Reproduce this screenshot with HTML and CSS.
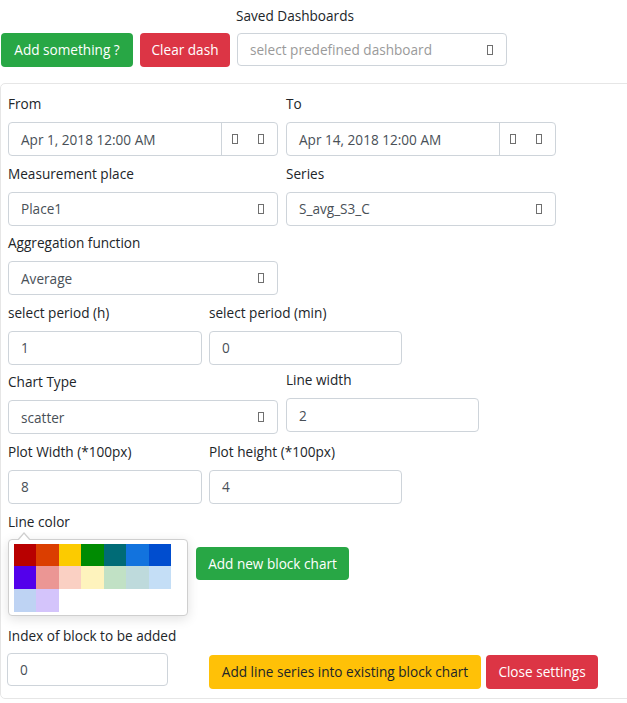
FILE: index.html
```html
<!DOCTYPE html>
<html>
<head>
<meta charset="utf-8">
<link rel="stylesheet" href="styles.css">
</head>
<body>
<div class="header">
  <div class="title">Saved Dashboards</div>
  <div class="toolbar">
    <button class="btn btn-green">Add something ?</button>
    <button class="btn btn-red">Clear dash</button>
    <div class="control select dash-select"><span class="placeholder">select predefined dashboard</span><span class="tofu"></span></div>
  </div>
</div>
<div class="card">
  <div class="row">
    <div class="field w270">
      <label>From</label>
      <div class="control date"><span class="val">Apr 1, 2018 12:00 AM</span><span class="addon"><span class="tofu"></span><span class="tofu"></span></span></div>
    </div>
    <div class="field w270">
      <label>To</label>
      <div class="control date"><span class="val">Apr 14, 2018 12:00 AM</span><span class="addon"><span class="tofu"></span><span class="tofu"></span></span></div>
    </div>
  </div>
  <div class="row">
    <div class="field w270">
      <label>Measurement place</label>
      <div class="control select"><span class="val">Place1</span><span class="tofu"></span></div>
    </div>
    <div class="field w270">
      <label>Series</label>
      <div class="control select"><span class="val">S_avg_S3_C</span><span class="tofu"></span></div>
    </div>
  </div>
  <div class="row">
    <div class="field w270">
      <label>Aggregation function</label>
      <div class="control select"><span class="val">Average</span><span class="tofu"></span></div>
    </div>
  </div>
  <div class="row narrow">
    <div class="field w194">
      <label>select period (h)</label>
      <div class="control"><span class="val">1</span></div>
    </div>
    <div class="field w193">
      <label>select period (min)</label>
      <div class="control"><span class="val">0</span></div>
    </div>
  </div>
  <div class="row">
    <div class="field w270">
      <label>Chart Type</label>
      <div class="control select"><span class="val">scatter</span><span class="tofu"></span></div>
    </div>
    <div class="field w193 raised">
      <label>Line width</label>
      <div class="control"><span class="val">2</span></div>
    </div>
  </div>
  <div class="row narrow">
    <div class="field w194">
      <label>Plot Width (*100px)</label>
      <div class="control"><span class="val">8</span></div>
    </div>
    <div class="field w193">
      <label>Plot height (*100px)</label>
      <div class="control"><span class="val">4</span></div>
    </div>
  </div>
  <div class="color-section">
    <label>Line color</label>
    <div class="color-row">
      <div class="picker">
        <span class="sw" style="background:#b80000"></span>
        <span class="sw" style="background:#db3e00"></span>
        <span class="sw" style="background:#fccb00"></span>
        <span class="sw" style="background:#008b02"></span>
        <span class="sw" style="background:#006b76"></span>
        <span class="sw" style="background:#1273de"></span>
        <span class="sw" style="background:#004dcf"></span>
        <span class="sw" style="background:#5300eb"></span>
        <span class="sw" style="background:#eb9694"></span>
        <span class="sw" style="background:#fad0c3"></span>
        <span class="sw" style="background:#fef3bd"></span>
        <span class="sw" style="background:#c1e1c5"></span>
        <span class="sw" style="background:#bedadc"></span>
        <span class="sw" style="background:#c4def6"></span>
        <span class="sw" style="background:#bed3f3"></span>
        <span class="sw" style="background:#d4c4fb"></span>
      </div>
      <button class="btn btn-green add-block">Add new block chart</button>
    </div>
  </div>
  <div class="index-section">
    <label>Index of block to be added</label>
    <div class="index-row">
      <div class="control index-input"><span class="val">0</span></div>
      <button class="btn btn-yellow">Add line series into existing block chart</button>
      <button class="btn btn-red">Close settings</button>
    </div>
  </div>
</div>
</body>
</html>
```

FILE: styles.css
```css
* { box-sizing: border-box; }
html { overflow: hidden; }
body {
  margin: 0;
  font-family: "Open Sans", "Noto Sans", sans-serif;
  font-size: 13.6px;
  color: #212529;
  background: #fff;
  width: 627px;
}
.header { padding-top: 6px; }
.title {
  width: 590px;
  text-align: center;
  line-height: 20px;
  margin-bottom: 7px;
}
.toolbar {
  display: flex;
  gap: 7px;
  padding-left: 1px;
  align-items: flex-start;
}
.btn {
  font-family: inherit;
  font-size: 13.6px;
  border: 0;
  border-radius: 4px;
  height: 34px;
  padding: 0;
  color: #fff;
  line-height: 34px;
  white-space: nowrap;
  text-align: center;
  cursor: pointer;
}
.btn-green { background: #28a745; }
.btn-red { background: #dc3545; }
.btn-yellow { background: #ffc107; color: #212529; }
.toolbar .btn-green { width: 132px; }
.toolbar .btn-red { width: 90px; }
.control {
  height: 34px;
  border: 1px solid #ced4da;
  border-radius: 4px;
  display: flex;
  align-items: center;
  padding: 0 12px;
  color: #495057;
  background: #fff;
}
.control .val { flex: 1; white-space: nowrap; }
.select { justify-content: space-between; }
.dash-select {
  width: 270px;
  height: 33px;
}
.placeholder { color: #9a9a9a; flex: 1; white-space: nowrap; }
.tofu {
  display: inline-block;
  width: 6px;
  height: 10px;
  border: 1px solid #6f6f6f;
  margin-right: 1px;
}
.date { padding-right: 0; }
.addon {
  display: flex;
  align-items: center;
  gap: 20px;
  height: 100%;
  border-left: 1px solid #ced4da;
  padding: 0 13px 0 10px;
}
.addon .tofu { margin-right: 0; }
.card {
  margin-top: 16px;
  border: 1px solid #e6e6e6;
  border-radius: 5px;
  padding: 10px 7px 9px 7px;
  width: 634px;
}
.row {
  display: flex;
  gap: 8px;
  align-items: flex-start;
  margin-bottom: 7.6px;
}
.row.narrow { gap: 7px; }
.field label, .color-section label, .index-section label {
  display: block;
  line-height: 20px;
  margin-bottom: 8px;
}
.w270 { width: 270px; }
.w194 { width: 194px; }
.w193 { width: 193px; }
.raised { margin-top: -2px; }
.color-section label { margin-bottom: 7px; }
.color-row {
  display: flex;
  gap: 8px;
  align-items: flex-start;
}
.picker {
  position: relative;
  width: 180px;
  height: 77px;
  border: 1px solid #cfcfcf;
  border-radius: 4px;
  background: #fff;
  box-shadow: 0 3px 12px rgba(0,0,0,0.12);
  padding: 4px 5px 3px 5px;
  display: flex;
  flex-wrap: wrap;
  align-content: flex-start;
}
.picker::before {
  content: "";
  position: absolute;
  left: 8px;
  top: -8px;
  border: 7px solid transparent;
  border-top: 0;
  border-bottom: 8px solid #cfcfcf;
}
.picker::after {
  content: "";
  position: absolute;
  left: 9px;
  top: -6px;
  border: 6px solid transparent;
  border-top: 0;
  border-bottom: 7px solid #fff;
}
.sw {
  width: 22.43px;
  height: 22.67px;
  display: block;
}
.add-block { margin-top: 8px; width: 153px; height: 33px; line-height: 33px; }
.index-section { margin-top: 10px; }
.index-section label { margin-bottom: 7px; }
.index-row {
  display: flex;
  align-items: flex-start;
}
.index-input { width: 161px; height: 33px; margin-left: -1px; margin-right: 41px; }
.index-row .btn { margin-top: 2px; }
.btn-yellow { width: 272px; margin-right: 5px; }
.index-row .btn-red { width: 112px; }
```
